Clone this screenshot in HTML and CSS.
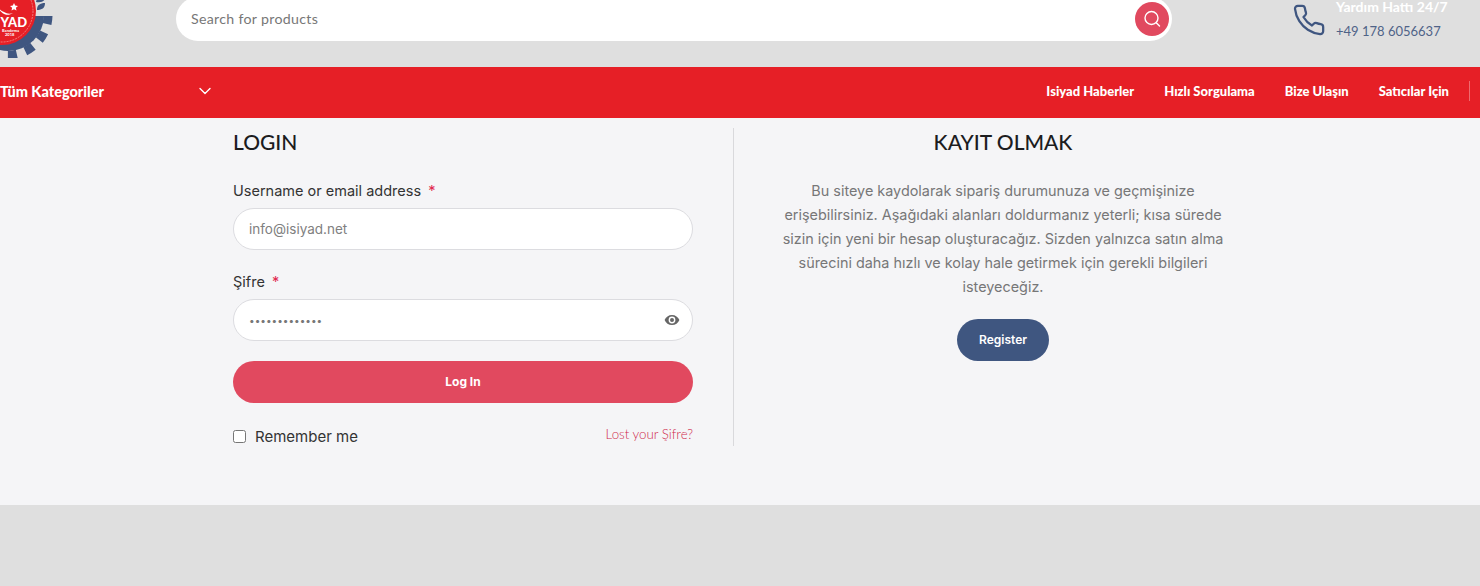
FILE: index.html
```html
<!DOCTYPE html>
<html>
  <head>
    <title>Login</title>
    <link rel="stylesheet" href="styles.css">
  </head>
  <body>
    <div class="page">
      <header class="topBar">
        <div class="logoBox">
          <svg class="logo" width="60" height="78" viewBox="0 -20 60 78">
            <defs>
              <clipPath id="gearClip"><rect x="-40" y="16" width="100" height="50"/></clipPath>
            </defs>
            <path d="M33 -6c6 2 9 1 11-4-6-2-9-1-11 4zM36 2c6 1 9-1 10-6-6-1-9 1-10 6zM37 10c5 0 8-2 8-7-5 0-8 2-8 7z" fill="#3f5680"/>
            <g clip-path="url(#gearClip)">
              <circle cx="8" cy="15" r="36" fill="#3f5680"/>
              <circle cx="8" cy="15" r="40" fill="none" stroke="#3f5680" stroke-width="9" stroke-dasharray="9 8.950"/>
            </g>
            <circle cx="2" cy="11" r="34" fill="#e61f26"/>
            <circle cx="2" cy="11" r="31" fill="none" stroke="#f3a0a0" stroke-width="0.7" stroke-dasharray="2 1"/>
            <path d="M-1 8a9 9 0 0 0 14 5 10 10 0 0 1-9-1 8 8 0 0 1-5-4z" fill="#fff"/>
            <path d="M14 3l1.200 2.600 2.800.3-2.100 1.900.6 2.800-2.500-1.400-2.500 1.400.6-2.800-2.100-1.900 2.800-.3z" fill="#fff"/>
            <text class="logoText" x="0.500" y="27">YAD</text>
            <text class="logoSmall" x="2" y="32">Bandırma</text>
            <text class="logoSmall" x="5" y="36">2018</text>
          </svg>
        </div>
        <div class="searchBox">
          <span class="searchText">Search for products</span>
          <span class="searchBtn">
            <svg width="20" height="20" viewBox="0 0 20 20" fill="none" stroke="#fff" stroke-width="1.400" stroke-linecap="round">
              <circle cx="9.500" cy="9" r="6.500"/>
              <path d="M14.500 14l3 3"/>
            </svg>
          </span>
        </div>
        <div class="helpLine">
          <svg class="phoneIcon" width="34" height="34" viewBox="0 0 24 24" fill="none" stroke="#3f5680" stroke-width="1.600" stroke-linecap="round" stroke-linejoin="round">
            <path d="M22 16.920v3a2 2 0 0 1-2.180 2 19.790 19.790 0 0 1-8.630-3.070 19.500 19.500 0 0 1-6-6 19.790 19.790 0 0 1-3.070-8.670A2 2 0 0 1 4.110 2h3a2 2 0 0 1 2 1.720c.13.960.36 1.900.7 2.810a2 2 0 0 1-.45 2.110L8.090 9.910a16 16 0 0 0 6 6l1.270-1.270a2 2 0 0 1 2.110-.45c.91.34 1.850.57 2.810.7A2 2 0 0 1 22 16.920z"/>
          </svg>
          <div class="helpText">
            <p class="helpTitle">Yardım Hattı 24/7</p>
            <p class="helpPhone">+49 178 6056637</p>
          </div>
        </div>
      </header>

      <nav class="mainNav">
        <div class="catMenu">
          <span>Tüm Kategoriler</span>
          <svg width="12" height="8" viewBox="0 0 12 8" fill="none" stroke="#fff" stroke-width="1.400" stroke-linecap="round" stroke-linejoin="round">
            <path d="M1 1.500l5 5 5-5"/>
          </svg>
        </div>
        <div class="navLinks">
          <a>Isiyad Haberler</a>
          <a>Hızlı Sorgulama</a>
          <a>Bize Ulaşın</a>
          <a>Satıcılar Için</a>
        </div>
      </nav>

      <main class="content">
        <div class="columns">
          <section class="loginCol">
            <h2>LOGIN</h2>
            <label class="fieldLabel">Username or email address <span class="req">*</span></label>
            <input class="field" placeholder="info@isiyad.net">
            <label class="fieldLabel">Şifre <span class="req">*</span></label>
            <div class="passBox">
              <input class="field passField" type="password" value="isiyad2018net">
              <svg class="eye" width="16" height="12" viewBox="0 0 16 12">
                <path fill="#666" fill-rule="evenodd" d="M8 1C4.600 1 1.800 3 .6 6c1.200 3 4 5 7.400 5s6.200-2 7.400-5C14.200 3 11.400 1 8 1zm0 8.400A3.400 3.400 0 1 1 8 2.600a3.400 3.400 0 0 1 0 6.800zM8 4a2 2 0 1 0 0 4 2 2 0 0 0 0-4z"/>
              </svg>
            </div>
            <button class="loginBtn">Log In</button>
            <div class="loginFoot">
              <label class="remember"><input type="checkbox"> Remember me</label>
              <a class="lostPass">Lost your Şifre?</a>
            </div>
          </section>
          <section class="registerCol">
            <h2>KAYIT OLMAK</h2>
            <p class="registerText">Bu siteye kaydolarak sipariş durumunuza ve geçmişinize erişebilirsiniz. Aşağıdaki alanları doldurmanız yeterli; kısa sürede sizin için yeni bir hesap oluşturacağız. Sizden yalnızca satın alma sürecini daha hızlı ve kolay hale getirmek için gerekli bilgileri isteyeceğiz.</p>
            <button class="registerBtn">Register</button>
          </section>
        </div>
      </main>
      <footer class="bottom"></footer>
    </div>
  </body>
</html>
```

FILE: styles.css
```css
html, body {
  margin: 0;
  height: 586px;
  overflow: hidden;
}
body {
  font-family: Inter, "Noto Sans", sans-serif;
  background-color: #dfdfdf;
}
.page {
  margin-top: -20px;
}
p {
  margin: 0;
}
h2 {
  margin: 0;
  font-family: Lato, sans-serif;
  font-size: 21px;
  line-height: 28px;
  padding-bottom: 2px;
  font-weight: 500;
  color: #1c1c1e;
}

/* top bar */
.topBar {
  height: 87px;
  display: flex;
  overflow: hidden;
}
.logoBox {
  width: 176px;
  flex-shrink: 0;
}
.logo {
  display: block;
}
.logoText {
  font-family: Lato, sans-serif;
  font-size: 13px;
  font-weight: 900;
  fill: #fff;
}
.logoSmall {
  font-family: Lato, sans-serif;
  font-size: 4px;
  font-weight: 700;
  fill: #fff;
}
.searchBox {
  width: 996px;
  height: 44px;
  margin-top: 17px;
  box-sizing: border-box;
  padding-left: 15px;
  padding-right: 3px;
  display: flex;
  align-items: center;
  justify-content: space-between;
  background-color: white;
  border-radius: 22px;
}
.searchText {
  margin-bottom: 2px;
  font-size: 14.200px;
  color: #777;
  font-family: Lato, sans-serif;
  letter-spacing: 0.3px;
}
.searchBtn {
  width: 34px;
  height: 34px;
  display: flex;
  align-items: center;
  justify-content: center;
  background-color: #e1495f;
  border-radius: 50%;
}
.helpLine {
  margin-left: 120px;
  margin-top: 18px;
  display: flex;
  gap: 10px;
}
.phoneIcon {
  margin-top: 5px;
}
.helpTitle {
  font-family: Lato, sans-serif;
  font-size: 14px;
  line-height: 18px;
  font-weight: 700;
  color: white;
}
.helpPhone {
  margin-top: 6px;
  font-family: Lato, sans-serif;
  font-size: 13px;
  line-height: 18px;
  color: #4f6388;
}

/* red nav */
.mainNav {
  height: 51px;
  box-sizing: border-box;
  padding-bottom: 3px;
  display: flex;
  align-items: center;
  justify-content: space-between;
  background-color: #e61f26;
  color: white;
  font-family: Lato, sans-serif;
  font-weight: 900;
  font-size: 13px;
}
.catMenu {
  width: 212px;
  box-sizing: border-box;
  padding-right: 1px;
  display: flex;
  align-items: center;
  justify-content: space-between;
  font-size: 14.500px;
}
.navLinks {
  display: flex;
  gap: 30px;
  margin-right: 10px;
  padding-right: 20px;
  border-right: 1px solid #ef6a6e;
  line-height: 20px;
}

/* login and register */
.content {
  height: 387px;
  box-sizing: border-box;
  padding-top: 10px;
  background-color: #f5f5f7;
}
.columns {
  margin-left: 233px;
  display: flex;
  height: 318px;
}
.loginCol {
  width: 460px;
  padding-right: 40px;
  border-right: 1px solid #d9d9dc;
}
.registerCol {
  width: 446px;
  margin-left: 46px;
  text-align: center;
}
.fieldLabel {
  display: block;
  margin-top: 20px;
  margin-bottom: 5px;
  font-size: 14.500px;
  line-height: 24px;
  color: #333;
}
h2 + .fieldLabel {
  margin-top: 21px;
}
.req {
  margin-left: 3px;
  color: #e1294f;
}
.field {
  display: block;
  width: 100%;
  height: 42px;
  box-sizing: border-box;
  padding: 0 15px;
  border: 1px solid #dcdce0;
  border-radius: 21px;
  background-color: white;
  font-family: Inter, sans-serif;
  font-size: 13.500px;
  color: #777;
  outline: none;
}
.field::placeholder {
  color: #808080;
}
.passField {
  font-size: 10px;
}
.passBox {
  position: relative;
}
.eye {
  position: absolute;
  right: 13px;
  top: 15px;
}
.loginBtn {
  display: block;
  width: 100%;
  height: 42px;
  margin-top: 20px;
  padding-bottom: 3px;
  border: none;
  border-radius: 21px;
  background-color: #e1495f;
  color: white;
  font-family: Inter, sans-serif;
  font-weight: 700;
  font-size: 12px;
  cursor: pointer;
}
.loginFoot {
  margin-top: 23px;
  display: flex;
  justify-content: space-between;
  align-items: center;
}
.remember {
  display: flex;
  align-items: center;
  gap: 9px;
  font-size: 15px;
  color: #333;
}
.remember input {
  margin: 0;
  width: 13px;
  height: 13px;
}
.lostPass {
  margin-bottom: 5px;
  font-family: Lato, sans-serif;
  font-weight: 300;
  font-size: 13.300px;
  color: #cf2a4c;
}
.registerText {
  margin-top: 21px;
  font-size: 14.400px;
  line-height: 24px;
  color: #777;
}
.registerBtn {
  margin-top: 20px;
  width: 92px;
  height: 42px;
  padding-bottom: 2px;
  border: none;
  border-radius: 21px;
  background-color: #3f5680;
  color: white;
  font-family: Inter, sans-serif;
  font-weight: 600;
  font-size: 12px;
  cursor: pointer;
}
.bottom {
  height: 100px;
}
```
